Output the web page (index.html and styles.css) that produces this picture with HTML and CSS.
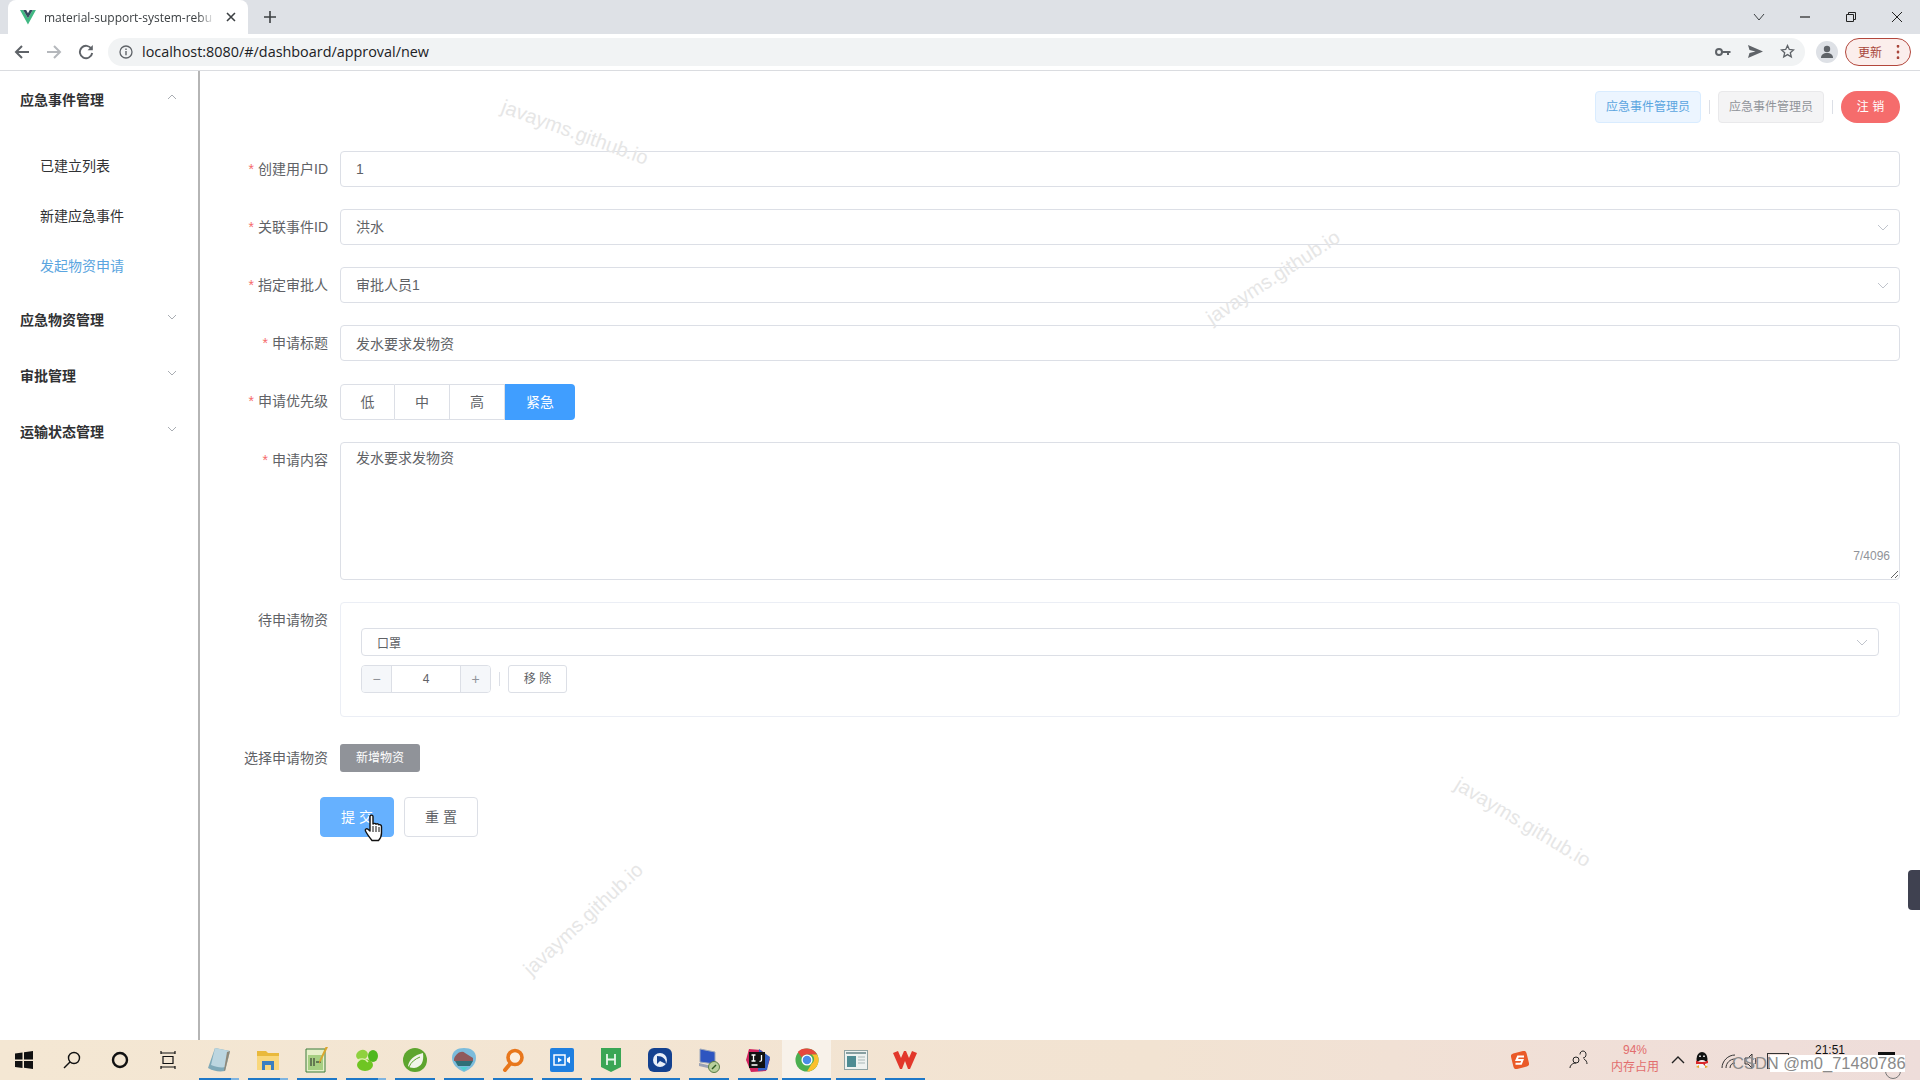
FILE: index.html
```html
<!DOCTYPE html>
<html lang="zh-CN">

<head>
    <meta charset="UTF-8">
    <meta name="viewport" content="width=device-width, initial-scale=1.0">
    <title>material-support-system</title>
    <link rel="stylesheet" href="styles.css">
</head>

<body>
    <!-- browser tabs -->
    <div class="tab-strip">
        <div class="tab">
            <svg class="tab-logo" width="16" height="15" viewBox="0 0 16 15">
                <path d="M0 0h3.200L8 8.200 12.800 0H16L8 14.500z" fill="#41b883" />
                <path d="M3.200 0h3L8 3.200 9.800 0h3L8 8.200z" fill="#35495e" />
            </svg>
            <span class="tab-title">material-support-system-rebu</span>
            <svg class="tab-close" width="10" height="10" viewBox="0 0 10 10">
                <path d="M1 1l8 8M9 1l-8 8" stroke="#3c4043" stroke-width="1.600" />
            </svg>
        </div>
        <svg class="tab-new" width="12" height="12" viewBox="0 0 12 12">
            <path d="M6 0v12M0 6h12" stroke="#3c4043" stroke-width="1.600" />
        </svg>
        <div class="window-btns">
            <svg width="12" height="8" viewBox="0 0 12 8">
                <path d="M1 1l5 6 5-6" fill="none" stroke="#3c4043" />
            </svg>
            <svg width="12" height="12" viewBox="0 0 12 12">
                <path d="M1 6h10" stroke="#222" stroke-width="1.200" />
            </svg>
            <svg width="12" height="12" viewBox="0 0 12 12">
                <path d="M1.500 3.500h7v7h-7zM3.500 3.500v-2h7v7h-2" fill="none" stroke="#222" />
            </svg>
            <svg width="12" height="12" viewBox="0 0 12 12">
                <path d="M1 1l10 10M11 1L1 11" stroke="#222" />
            </svg>
        </div>
    </div>

    <!-- address bar -->
    <div class="toolbar">
        <svg class="nav-icon" width="16" height="16" viewBox="0 0 16 16">
            <path d="M15 8H2M8 2L2 8l6 6" fill="none" stroke="#5f6368" stroke-width="2" />
        </svg>
        <svg class="nav-icon" width="16" height="16" viewBox="0 0 16 16">
            <path d="M1 8h13M8 2l6 6-6 6" fill="none" stroke="#b5b8bc" stroke-width="2" />
        </svg>
        <svg class="nav-icon" width="16" height="16" viewBox="0 0 16 16">
            <path d="M13.500 5A6.200 6.200 0 1 0 14.200 9" fill="none" stroke="#5f6368" stroke-width="1.900" />
            <path d="M14.800 1v5.200H9.600z" fill="#5f6368" />
        </svg>
        <div class="omnibox">
            <svg width="14" height="14" viewBox="0 0 14 14">
                <circle cx="7" cy="7" r="6" fill="none" stroke="#5f6368" stroke-width="1.300" />
                <path d="M7 6v4.200M7 3.400v1.500" stroke="#5f6368" stroke-width="1.400" />
            </svg>
            <span class="url">localhost:8080/#/dashboard/approval/new</span>
            <div class="omni-icons">
                <svg width="16" height="10" viewBox="0 0 16 10">
                    <circle cx="4" cy="5" r="3" fill="none" stroke="#5f6368" stroke-width="2" />
                    <path d="M7 4h8.500v2H14v2h-2V6H7z" fill="#5f6368" />
                </svg>
                <svg width="15" height="13" viewBox="0 0 15 13">
                    <path d="M0 0l15 6.500L0 13l1.500-5 6-1.500-6-1.500z" fill="#5f6368" />
                </svg>
                <svg width="15" height="15" viewBox="0 0 15 15">
                    <path d="M7.500 1.500l1.800 4 4.200.4-3.200 2.800 1 4.200-3.800-2.300-3.800 2.300 1-4.200L1.500 5.900l4.200-.4z" fill="none" stroke="#5f6368" stroke-width="1.300" />
                </svg>
            </div>
        </div>
        <div class="avatar">
            <svg width="14" height="14" viewBox="0 0 14 14">
                <circle cx="7" cy="4" r="3.200" fill="#5f6368" />
                <path d="M1 13c0-3.500 2.500-5 6-5s6 1.500 6 5z" fill="#5f6368" />
            </svg>
        </div>
        <div class="update-pill">
            <span>更新</span>
            <svg width="4" height="14" viewBox="0 0 4 14">
                <path d="M2 1v.5M2 6.700v.5M2 12.500v.5" stroke="#a8453a" stroke-width="2.600" stroke-linecap="round" />
            </svg>
        </div>
    </div>

    <div class="app">
        <!-- side menu -->
        <div class="sidebar">
            <div class="menu-head">
                <span>应急事件管理</span>
                <svg class="chevron" width="10" height="6" viewBox="0 0 10 6">
                    <path d="M1 5l4-4 4 4" fill="none" stroke="#a9adb3" />
                </svg>
            </div>
            <ul class="menu-list">
                <li>已建立列表</li>
                <li>新建应急事件</li>
                <li class="active">发起物资申请</li>
            </ul>
            <div class="menu-head">
                <span>应急物资管理</span>
                <svg class="chevron" width="10" height="6" viewBox="0 0 10 6">
                    <path d="M1 1l4 4 4-4" fill="none" stroke="#a9adb3" />
                </svg>
            </div>
            <div class="menu-head">
                <span>审批管理</span>
                <svg class="chevron" width="10" height="6" viewBox="0 0 10 6">
                    <path d="M1 1l4 4 4-4" fill="none" stroke="#a9adb3" />
                </svg>
            </div>
            <div class="menu-head">
                <span>运输状态管理</span>
                <svg class="chevron" width="10" height="6" viewBox="0 0 10 6">
                    <path d="M1 1l4 4 4-4" fill="none" stroke="#a9adb3" />
                </svg>
            </div>
        </div>

        <div class="main">
            <div class="user-bar">
                <span class="tag tag-blue">应急事件管理员</span>
                <i class="v-line"></i>
                <span class="tag tag-gray">应急事件管理员</span>
                <i class="v-line"></i>
                <span class="logout">注 销</span>
            </div>

            <div class="form">
                <div class="form-row">
                    <label><em>*</em>创建用户ID</label>
                    <input class="field" type="text" value="1">
                </div>
                <div class="form-row">
                    <label><em>*</em>关联事件ID</label>
                    <div class="field select">洪水
                        <svg width="12" height="7" viewBox="0 0 12 7">
                            <path d="M1 1l5 5 5-5" fill="none" stroke="#c0c4cc" />
                        </svg>
                    </div>
                </div>
                <div class="form-row">
                    <label><em>*</em>指定审批人</label>
                    <div class="field select">审批人员1
                        <svg width="12" height="7" viewBox="0 0 12 7">
                            <path d="M1 1l5 5 5-5" fill="none" stroke="#c0c4cc" />
                        </svg>
                    </div>
                </div>
                <div class="form-row">
                    <label><em>*</em>申请标题</label>
                    <input class="field" type="text" value="发水要求发物资">
                </div>
                <div class="form-row">
                    <label><em>*</em>申请优先级</label>
                    <div class="radio-group">
                        <span>低</span>
                        <span>中</span>
                        <span>高</span>
                        <span class="checked">紧急</span>
                    </div>
                </div>
                <div class="form-row">
                    <label><em>*</em>申请内容</label>
                    <div class="text-wrap">
                        <textarea class="area">发水要求发物资</textarea>
                        <span class="count">7/4096</span>
                    </div>
                </div>
                <div class="form-row row-box">
                    <label>待申请物资</label>
                    <div class="goods-box">
                        <div class="select-small">口罩
                            <svg width="12" height="7" viewBox="0 0 12 7">
                                <path d="M1 1l5 5 5-5" fill="none" stroke="#c0c4cc" />
                            </svg>
                        </div>
                        <div class="goods-line">
                            <div class="stepper">
                                <span class="step">−</span>
                                <span class="num">4</span>
                                <span class="step">+</span>
                            </div>
                            <i class="v-line"></i>
                            <span class="btn-remove">移 除</span>
                        </div>
                    </div>
                </div>
                <div class="form-row row-add">
                    <label>选择申请物资</label>
                    <span class="btn-add">新增物资</span>
                </div>
                <div class="form-actions">
                    <span class="btn-submit">提 交</span>
                    <span class="btn-reset">重 置</span>
                </div>
            </div>

            <!-- things floating over the page -->
            <span class="mark mark-1">javayms.github.io</span>
            <span class="mark mark-2">javayms.github.io</span>
            <span class="mark mark-3">javayms.github.io</span>
            <span class="mark mark-4">javayms.github.io</span>
            <svg class="hand" width="20" height="28" viewBox="0 0 20 28">
                <path d="M6 2c1-1.500 3-1 3 .5V10c1-1 2.500-.8 3 .2 1-.8 2.500-.4 2.800.6 1.200-.5 2.700.2 2.700 2V19c0 3-1.500 6-3 7.500H8C6 24 3 20 1.500 17c-.8-1.600 1-3 2.500-1.800L6 17z" fill="#fff" stroke="#111" stroke-width="1.400" stroke-linejoin="round" />
                <path d="M9 12v6M12 12v6M15 13v5" stroke="#111" />
            </svg>
            <div class="side-handle"></div>
        </div>
    </div>

    <!-- windows taskbar -->
    <div class="taskbar">
        <div class="sys-btn">
            <svg width="20" height="20" viewBox="0 0 20 20">
                <path d="M1 3.500l7.500-1V9.500H1zM10 2.200L19 1v8.500h-9zM1 11h7.500v7L1 17zM10 11h9v8l-9-1.200z" fill="#111" />
            </svg>
        </div>
        <div class="sys-btn">
            <svg width="20" height="20" viewBox="0 0 20 20">
                <circle cx="12" cy="8" r="5.500" fill="none" stroke="#111" stroke-width="1.400" />
                <path d="M8 12l-6 6" stroke="#111" stroke-width="1.400" />
            </svg>
        </div>
        <div class="sys-btn">
            <svg width="20" height="20" viewBox="0 0 20 20">
                <circle cx="10" cy="10" r="7" fill="none" stroke="#111" stroke-width="2.400" />
            </svg>
        </div>
        <div class="sys-btn">
            <svg width="20" height="20" viewBox="0 0 20 20">
                <path d="M5 6.500h10v7H5zM3 3h14M3 17h14M3 1v3M17 1v3M3 16v3M17 16v3" fill="none" stroke="#111" stroke-width="1.200" />
            </svg>
        </div>
        <div class="task-apps">
            <div class="app-slot multi">
                <svg width="24" height="26" viewBox="0 0 24 26">
                    <path d="M8 1l15 3-5 20c-6 1-12 0-17-3z" fill="#7fa9b8" />
                    <path d="M8 1l15 3-4 16c-5 1-10 0-15-2z" fill="#bcd6e0" />
                    <path d="M20 5l3-1-5 20-1-1z" fill="#8f8878" />
                </svg>
            </div>
            <div class="app-slot multi">
                <svg width="24" height="22" viewBox="0 0 24 22">
                    <path d="M1 2h9l2 2h11v4H1z" fill="#e9b93c" />
                    <path d="M1 7h22v14H1z" fill="#f9d77c" />
                    <path d="M6 12h12v9h-3v-5H9v5H6z" fill="#3a7fc0" />
                </svg>
            </div>
            <div class="app-slot">
                <svg width="24" height="26" viewBox="0 0 24 26">
                    <path d="M1 2h19v23H1z" fill="#e6efc9" stroke="#3d7d3a" />
                    <path d="M3 8h15v15H3z" fill="#a6cf82" />
                    <path d="M6 11v8M9 11v8M11 15h5" stroke="#222" />
                    <path d="M23 0l-7 14-2 3 .5-4L21-1z" fill="#d9a62e" />
                </svg>
            </div>
            <div class="app-slot multi">
                <svg width="26" height="24" viewBox="0 0 26 24">
                    <ellipse cx="9" cy="7" rx="6" ry="5" fill="#8fd13f" transform="rotate(-25 9 7)" />
                    <ellipse cx="20" cy="8" rx="5" ry="6" fill="#4fb81e" />
                    <ellipse cx="12" cy="17" rx="8" ry="6" fill="#6fc522" />
                    <path d="M5 12c4-2 8-1 10 2" fill="none" stroke="#dff3b0" stroke-width="1.500" />
                </svg>
            </div>
            <div class="app-slot">
                <svg width="24" height="24" viewBox="0 0 24 24">
                    <circle cx="12" cy="12" r="12" fill="#5da52e" />
                    <path d="M20 5c1 8-1 14-9 15-3 0-5-1-6-2 1-6 6-11 15-13z" fill="#f2f5ea" />
                    <path d="M6 19c2-5 6-8 11-10" fill="none" stroke="#5da52e" />
                </svg>
            </div>
            <div class="app-slot">
                <svg width="24" height="24" viewBox="0 0 24 24">
                    <path d="M12 0c7 0 12 3 12 10 0 6-5 11-12 14C5 21 0 16 0 10 0 3 5 0 12 0z" fill="#7cbcdc" />
                    <path d="M2 11c2-6 8-9 11-6l8 5v3H2z" fill="#90595c" />
                    <path d="M3 13h18l-3 5H6z" fill="#2f6f78" />
                    <path d="M8 19h8l-4 4z" fill="#4fd0d0" />
                </svg>
            </div>
            <div class="app-slot">
                <svg width="24" height="24" viewBox="0 0 24 24">
                    <circle cx="14" cy="9.500" r="7" fill="#fbeee0" stroke="#e8771c" stroke-width="3.600" />
                    <path d="M9 16l-5 6" stroke="#e8771c" stroke-width="4" stroke-linecap="round" />
                </svg>
            </div>
            <div class="app-slot">
                <svg width="24" height="24" viewBox="0 0 24 24">
                    <rect width="24" height="24" rx="2" fill="#1f7fe0" />
                    <path d="M4 7h11v10H4z" fill="none" stroke="#fff" stroke-width="1.500" />
                    <path d="M8 9.500l4 2.500-4 2.500zM17 10.500l3-2v7l-3-2z" fill="#fff" />
                </svg>
            </div>
            <div class="app-slot">
                <svg width="20" height="24" viewBox="0 0 20 24">
                    <path d="M0 0h20v19l-10 5-10-5z" fill="#3aa655" />
                    <path d="M6 6v11M14 6v11M6 11.500h8" stroke="#e8f7ea" stroke-width="1.800" fill="none" />
                </svg>
            </div>
            <div class="app-slot">
                <svg width="24" height="24" viewBox="0 0 24 24">
                    <rect width="24" height="24" rx="6" fill="#14418f" />
                    <circle cx="12" cy="12" r="7" fill="#e9eff8" />
                    <path d="M9 8c6 0 9 3 9 8l-6-3-3 3z" fill="#14418f" />
                </svg>
            </div>
            <div class="app-slot">
                <svg width="24" height="26" viewBox="0 0 24 26">
                    <path d="M3 2l15 3v12L3 15z" fill="#2e55c0" stroke="#9aa6bb" />
                    <path d="M2 16l13 3v3L2 19z" fill="#9aa2b5" />
                    <circle cx="17" cy="20" r="5.500" fill="#b9d09c" stroke="#5b7d45" />
                    <path d="M15 22l4-4" stroke="#2f5a22" stroke-width="1.500" />
                </svg>
            </div>
            <div class="app-slot">
                <svg width="24" height="24" viewBox="0 0 24 24">
                    <path d="M3 1l12 1 9 9-4 12-15 1L0 12z" fill="#d1245f" />
                    <path d="M13 1l11 8-3 13-9 1z" fill="#3560c4" />
                    <rect x="3" y="4" width="16" height="16" fill="#111" />
                    <path d="M5.500 7h4M7.500 7v6M5.500 13h4M15.500 7v5q0 1.500-2 1.300M5.500 17h6" stroke="#fff" stroke-width="1.300" fill="none" />
                </svg>
            </div>
            <div class="app-slot chrome-slot">
                <svg width="24" height="24" viewBox="0 0 26 26">
                    <circle cx="13" cy="13" r="12.500" fill="#4caf50" />
                    <path d="M13 .5A12.500 12.500 0 0 1 24 7H13a6 6 0 0 0-5.500 3.500L3 4.200A12.500 12.500 0 0 1 13 .5z" fill="#e5483c" />
                    <path d="M24 7a12.500 12.500 0 0 1-11 18.500l5-8.500a6 6 0 0 0 0-10z" fill="#fbc02d" />
                    <circle cx="13" cy="13" r="6" fill="#fff" />
                    <circle cx="13" cy="13" r="4.600" fill="#4a8de8" />
                </svg>
            </div>
            <div class="app-slot">
                <svg width="24" height="20" viewBox="0 0 24 20">
                    <rect x=".5" y=".5" width="23" height="19" fill="#eef2f0" stroke="#8fa3a3" />
                    <path d="M2 3h20" stroke="#6c8a8d" stroke-width="1.600" />
                    <path d="M3 6h9v11H3z" fill="#4e8c93" />
                    <path d="M14 7h7M14 10h7M14 13h7" stroke="#a9b8b8" />
                </svg>
            </div>
            <div class="app-slot">
                <svg width="24" height="20" viewBox="0 0 24 20">
                    <path d="M0 3l5-2 3 7 3-7h2l3 7 3-7 5 2-7 16h-2l-3-8-3 8H7z" fill="#e2382b" />
                </svg>
            </div>
        </div>
        <div class="tray">
            <svg class="tray-ime" width="18" height="18" viewBox="0 0 18 18">
                <rect x="1" y="1" width="16" height="16" rx="3" fill="#ea5a28" transform="rotate(-14 9 9)" />
                <path d="M13 5.500H7L5.500 9h6L10 12.800H4.500" fill="none" stroke="#fff" stroke-width="2" />
            </svg>
            <svg class="tray-people" width="22" height="20" viewBox="0 0 22 20">
                <circle cx="7" cy="10" r="3" fill="none" stroke="#222" />
                <path d="M1 18c0-3 3-5 6-5M14 8c1.800 0 3-1.500 3-3.500S15.800 1 14 1s-3 1.500-3 3.500M18 14c0-2-1-4-3-5" fill="none" stroke="#222" />
            </svg>
            <div class="memory">
                <span>94%</span>
                <span>内存占用</span>
            </div>
            <svg class="tray-up" width="14" height="8" viewBox="0 0 14 8">
                <path d="M1 7l6-6 6 6" fill="none" stroke="#222" stroke-width="1.400" />
            </svg>
            <svg class="tray-qq" width="16" height="17" viewBox="0 0 16 17">
                <ellipse cx="8" cy="7" rx="5.500" ry="7" fill="#111" />
                <ellipse cx="8" cy="12" rx="5" ry="4" fill="#f4f4f4" />
                <path d="M2 8.500c4 2 8 2 12 0v2.500l-3 1v2l-2-2H2z" fill="#d8282a" />
                <path d="M2 15l3-2v3zM14 15l-3-2v3z" fill="#e8a72a" />
                <path d="M6 3.500v1.500M10 3.500v1.500" stroke="#fff" stroke-width="1.600" />
            </svg>
            <svg class="tray-net" width="20" height="16" viewBox="0 0 20 16">
                <path d="M1 15C1 8 7 2 14 2M5 15c0-5 4-9 9-9M9 15c0-3 2-5 5-5" fill="none" stroke="#333" />
            </svg>
            <svg class="tray-vol" width="18" height="16" viewBox="0 0 18 16">
                <path d="M1 5h3l4-4v14l-4-4H1z" fill="none" stroke="#333" />
                <path d="M11 5c1 2 1 4 0 6" fill="none" stroke="#333" />
            </svg>
            <div class="ime-box"></div>
            <div class="clock">21:51</div>
            <div class="note-icon"></div>
            <div class="note-ring"></div>
            <div class="csdn">CSDN @m0_71480786</div>
        </div>
    </div>
</body>

</html>
```

FILE: styles.css
```css
* {
    box-sizing: border-box;
}

html,
body {
    margin: 0;
    height: 1080px;
    overflow: hidden;
}

body {
    display: flex;
    flex-direction: column;
    background-color: #fff;
    font-family: "Liberation Sans", "Noto Sans CJK SC", sans-serif;
    font-size: 14px;
    color: #606266;
}

/* browser chrome */
.tab-strip {
    height: 34px;
    display: flex;
    align-items: center;
    background-color: #dee1e6;
}

.tab {
    width: 240px;
    height: 34px;
    margin-left: 8px;
    padding: 0 12px;
    display: flex;
    align-items: center;
    background-color: #fff;
    border-radius: 8px 8px 0 0;
}

.tab-title {
    width: 172px;
    margin-left: 8px;
    white-space: nowrap;
    font-family: "Open Sans", sans-serif;
    font-size: 12px;
    color: #3c4043;
    -webkit-mask-image: linear-gradient(90deg, #000 90%, transparent);
}

.tab-close {
    margin-left: 11px;
}

.tab-new {
    margin-left: 16px;
}

.window-btns {
    margin-left: auto;
    display: flex;
    align-items: center;
    gap: 34px;
    padding-right: 17px;
}

.toolbar {
    height: 37px;
    padding: 0 9px 1px 14px;
    display: flex;
    align-items: center;
    background-color: #fff;
    border-bottom: 1px solid #dadce0;
}

.nav-icon {
    margin-right: 16px;
    flex-shrink: 0;
}

.omnibox {
    width: 1697px;
    height: 28px;
    margin-left: -2px;
    padding: 0 10px 0 11px;
    display: flex;
    align-items: center;
    flex-shrink: 0;
    background-color: #f1f3f4;
    border-radius: 14px;
}

.url {
    margin-left: 9px;
    font-family: "Open Sans", sans-serif;
    font-size: 14.4px;
    color: #202124;
}

.omni-icons {
    margin-left: auto;
    display: flex;
    align-items: center;
    gap: 17px;
}

.avatar {
    width: 22px;
    height: 22px;
    margin-left: 11px;
    display: flex;
    align-items: center;
    justify-content: center;
    background-color: #dee1e6;
    border-radius: 50%;
}

.update-pill {
    width: 66px;
    height: 28px;
    margin-left: 7px;
    padding: 0 10px 0 12px;
    display: flex;
    align-items: center;
    justify-content: space-between;
    background-color: #fbeeec;
    border: 1px solid #b3473c;
    border-radius: 14px;
    font-size: 12px;
    color: #a8453a;
}

/* page */
.app {
    flex: 1;
    display: flex;
    min-height: 0;
}

.sidebar {
    width: 200px;
    flex-shrink: 0;
    border-right: 2px solid #b5b5b5;
}

.menu-head {
    height: 56px;
    padding: 0 21px 0 20px;
    display: flex;
    align-items: center;
    justify-content: space-between;
    font-weight: 700;
    color: #303133;
}

.chevron {
    margin-top: -4px;
}

.menu-list {
    margin: 14px 0 0;
    padding: 0;
    list-style: none;
}

.menu-list li {
    height: 50px;
    line-height: 50px;
    padding-left: 40px;
    color: #303133;
}

.menu-list li.active {
    color: #5aa5e0;
}

.main {
    flex: 1;
    position: relative;
    overflow: hidden;
}

.user-bar {
    height: 32px;
    margin-top: 20px;
    padding-right: 20px;
    display: flex;
    align-items: center;
    justify-content: flex-end;
}

.tag {
    width: 106px;
    height: 32px;
    line-height: 30px;
    text-align: center;
    font-size: 12px;
    border-radius: 4px;
}

.tag-blue {
    background-color: #ecf5ff;
    border: 1px solid #d9ecff;
    color: #5aa5e0;
}

.tag-gray {
    background-color: #f4f4f5;
    border: 1px solid #e9e9eb;
    color: #909399;
}

.v-line {
    width: 1px;
    height: 14px;
    margin: 0 8px;
    background-color: #dcdfe6;
}

.logout {
    width: 59px;
    height: 32px;
    line-height: 32px;
    text-align: center;
    font-size: 12px;
    color: #fff;
    background-color: #f56c6c;
    border-radius: 16px;
}

.form {
    margin-top: 28px;
    padding-right: 20px;
}

.form-row {
    display: flex;
    margin-bottom: 22px;
}

.form-row label {
    width: 140px;
    flex-shrink: 0;
    padding-right: 12px;
    line-height: 36px;
    text-align: right;
    white-space: nowrap;
    color: #606266;
}

.form-row label em {
    margin-right: 4px;
    font-style: normal;
    color: #f56c6c;
}

.field {
    flex: 1;
    height: 36px;
    padding: 0 15px;
    border: 1px solid #dcdfe6;
    border-radius: 4px;
    background-color: #fff;
    font-family: inherit;
    font-size: 14px;
    color: #606266;
    line-height: 32px;
}

.select {
    display: flex;
    align-items: center;
    justify-content: space-between;
    padding-right: 10px;
}

.radio-group {
    display: flex;
    height: 36px;
    margin-top: 1px;
}

.radio-group span {
    width: 55px;
    line-height: 34px;
    text-align: center;
    border: 1px solid #dcdfe6;
    border-left: 0;
    color: #606266;
}

.radio-group span:first-child {
    border-left: 1px solid #dcdfe6;
    border-radius: 4px 0 0 4px;
}

.radio-group span.checked {
    width: 70px;
    line-height: 36px;
    color: #fff;
    background-color: #409eff;
    border: 0;
    border-radius: 0 4px 4px 0;
}

.text-wrap {
    flex: 1;
    position: relative;
    height: 138px;
}

.area {
    display: block;
    width: 100%;
    height: 138px;
    padding: 5px 15px;
    border: 1px solid #dcdfe6;
    border-radius: 4px;
    font-family: inherit;
    font-size: 14px;
    line-height: 21px;
    color: #606266;
}

.count {
    position: absolute;
    right: 10px;
    bottom: 17px;
    font-size: 12px;
    color: #909399;
}

.row-box {
    margin-bottom: 27px;
}

.goods-box {
    flex: 1;
    height: 115px;
    padding: 25px 20px 0;
    border: 1px solid #ebeef5;
    border-radius: 4px;
}

.select-small {
    height: 28px;
    padding: 0 10px 0 15px;
    display: flex;
    align-items: center;
    justify-content: space-between;
    border: 1px solid #dcdfe6;
    border-radius: 4px;
    font-size: 12px;
}

.goods-line {
    margin-top: 9px;
    display: flex;
    align-items: center;
}

.stepper {
    width: 130px;
    height: 28px;
    display: flex;
    border: 1px solid #dcdfe6;
    border-radius: 4px;
    overflow: hidden;
    font-size: 12px;
}

.step {
    width: 29px;
    line-height: 26px;
    text-align: center;
    font-size: 14px;
    color: #909399;
    background-color: #f5f7fa;
}

.num {
    flex: 1;
    line-height: 26px;
    text-align: center;
    border-left: 1px solid #dcdfe6;
    border-right: 1px solid #dcdfe6;
}

.btn-remove {
    width: 59px;
    height: 28px;
    line-height: 26px;
    text-align: center;
    font-size: 12px;
    border: 1px solid #dcdfe6;
    border-radius: 3px;
}

.row-add {
    margin-bottom: 25px;
}

.row-add label {
    line-height: 28px;
}

.btn-add {
    width: 80px;
    height: 28px;
    line-height: 28px;
    text-align: center;
    font-size: 12px;
    color: #fff;
    background-color: #909399;
    border-radius: 3px;
}

.form-actions {
    margin-left: 120px;
    display: flex;
    gap: 10px;
}

.btn-submit,
.btn-reset {
    width: 74px;
    height: 40px;
    line-height: 38px;
    text-align: center;
    border: 1px solid #dcdfe6;
    border-radius: 4px;
}

.btn-submit {
    color: #fff;
    background-color: #66b1ff;
    border-color: #66b1ff;
}

/* overlays */
.mark {
    position: absolute;
    font-size: 20px;
    line-height: 24px;
    white-space: nowrap;
    color: #e6e6e6;
}

.mark-1 {
    left: 375px;
    top: 61px;
    transform: translate(-50%, -50%) rotate(20deg);
}

.mark-2 {
    left: 1073px;
    top: 206px;
    transform: translate(-50%, -50%) rotate(-33deg);
}

.mark-3 {
    left: 1323px;
    top: 751px;
    transform: translate(-50%, -50%) rotate(31deg);
}

.mark-4 {
    left: 383px;
    top: 848px;
    transform: translate(-50%, -50%) rotate(-43deg);
}

.hand {
    position: absolute;
    left: 164px;
    top: 743px;
}

.side-handle {
    position: absolute;
    right: 0;
    top: 799px;
    width: 12px;
    height: 40px;
    background-color: #3f4150;
    border-radius: 4px 0 0 4px;
}

/* taskbar */
.taskbar {
    height: 40px;
    position: relative;
    display: flex;
    align-items: center;
    background: linear-gradient(90deg, #f4e7d3, #f2e3d2 60%, #f0dfd8 85%, #eeddda);
}

.sys-btn {
    width: 48px;
    display: flex;
    justify-content: center;
}

.task-apps {
    margin-left: 2px;
    display: flex;
    height: 40px;
}

.app-slot {
    width: 49px;
    height: 40px;
    padding-bottom: 1px;
    display: flex;
    align-items: center;
    justify-content: center;
    background: linear-gradient(#1e78c8, #1e78c8) center bottom / 40px 2px no-repeat;
}

.app-slot.multi {
    background: linear-gradient(90deg, #1e78c8 32px, #7fb4e0 32px) center bottom / 40px 2px no-repeat;
}

.app-slot.chrome-slot {
    background: linear-gradient(#1e78c8, #1e78c8) center bottom / 100% 2px no-repeat, #f8f2ea;
}

.tray {
    flex: 1;
}

.tray>* {
    position: absolute;
}

.tray-ime {
    left: 1511px;
    top: 11px;
}

.tray-people {
    left: 1569px;
    top: 10px;
}

.memory {
    left: 1605px;
    top: 2px;
    width: 60px;
    display: flex;
    flex-direction: column;
    align-items: center;
    font-size: 12px;
    line-height: 17px;
    color: #e26d6d;
}

.tray-up {
    left: 1671px;
    top: 16px;
}

.tray-qq {
    left: 1694px;
    top: 12px;
}

.tray-net {
    left: 1721px;
    top: 13px;
}

.tray-vol {
    left: 1744px;
    top: 13px;
}

.ime-box {
    left: 1767px;
    top: 13px;
    width: 22px;
    height: 16px;
    border: 1px solid #333;
}

.clock {
    left: 1815px;
    top: 1px;
    font-size: 12px;
    line-height: 18px;
    color: #111;
}

.note-icon {
    left: 1878px;
    top: 12px;
    width: 17px;
    height: 5px;
    background-color: #111;
}

.note-ring {
    left: 1885px;
    top: 23px;
    width: 16px;
    height: 16px;
    border: 1px solid #777;
    border-radius: 50%;
}

.csdn {
    left: 1732px;
    top: 15px;
    width: 173px;
    height: 17px;
    line-height: 17px;
    white-space: nowrap;
    font-size: 16.5px;
    color: #8a8a8a;
    background: linear-gradient(90deg, transparent 22%, #fff 22%);
}
```
